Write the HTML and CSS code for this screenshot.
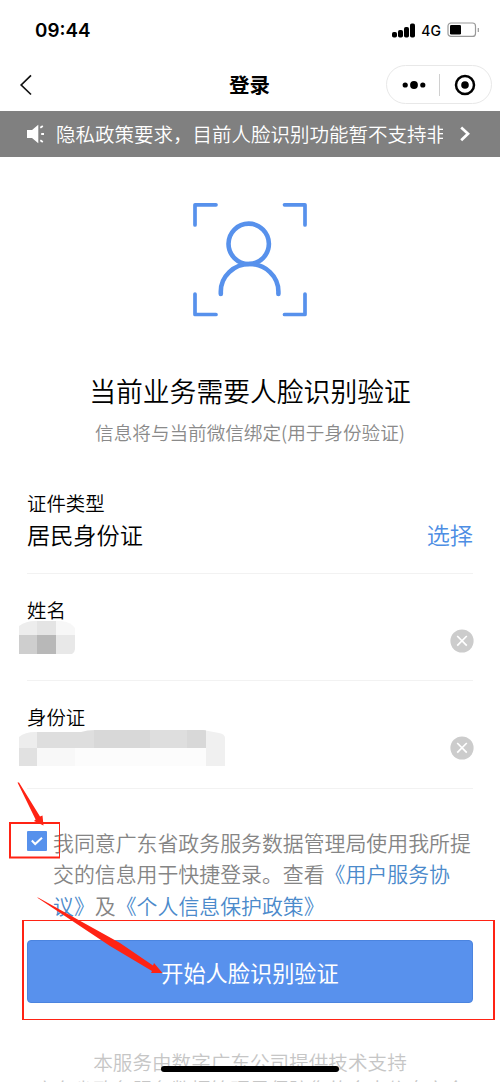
FILE: index.html
```html
<!DOCTYPE html>
<html lang="zh-CN">
<head>
<meta charset="utf-8">
<title>登录</title>
<link rel="stylesheet" href="styles.css">
</head>
<body>
<div class="screen">
  <header class="status">
    <span class="time">09:44</span>
    <div class="status-right">
      <svg class="signal" width="24" height="15" viewBox="0 0 24 15"><rect x="0" y="9" width="5" height="5.5" rx="1.8"/><rect x="6" y="7" width="5" height="7.5" rx="1.8"/><rect x="12" y="4" width="5" height="10.5" rx="1.8"/><rect x="18" y="0.5" width="5" height="14" rx="1.8"/></svg>
      <span class="network">4G</span>
      <svg class="battery" width="33" height="16" viewBox="0 0 33 16"><rect x="1" y="1" width="27.5" height="13.4" rx="3" fill="#fff" stroke="#999" stroke-width="1.2"/><rect x="3" y="3" width="11" height="9.6" rx="1.3"/><path d="M31.3 6v4" stroke="#999" stroke-width="1.2"/></svg>
    </div>
  </header>
  <nav class="nav">
    <svg class="back" width="14" height="22" viewBox="0 0 14 22"><path d="M12 1.3 2.2 11 12 20.5" fill="none" stroke="#111" stroke-width="1.7"/></svg>
    <h1 class="nav-title">登录</h1>
    <div class="capsule">
      <svg class="more" width="24" height="8" viewBox="0 0 24 8"><circle cx="3.2" cy="4" r="2.6"/><circle cx="12" cy="4" r="3.9"/><circle cx="20.8" cy="4" r="2.6"/></svg>
      <span class="capsule-line"></span>
      <svg class="target" width="22" height="22" viewBox="0 0 22 22"><circle cx="11" cy="11" r="9" fill="none" stroke="#000" stroke-width="2.5"/><circle cx="11" cy="11" r="3.8"/></svg>
    </div>
  </nav>
  <div class="notice">
    <svg class="speaker" width="18" height="20" viewBox="0 0 18 20"><path d="M0 6h5L11.3.8v18.4L5 14H0z" fill="#fff"/><path d="m13.3 3.7 2.5-1.8M14.2 10H17M13.3 16.2l2.5 1.8" stroke="#fff" stroke-width="1.8"/></svg>
    <div class="notice-text">隐私政策要求，目前人脸识别功能暂不支持非</div>
    <svg class="notice-arrow" width="12" height="16" viewBox="0 0 12 16"><path d="m2.2 1.6 6.8 6.2-6.8 6.5" fill="none" stroke="#fff" stroke-width="2.7"/></svg>
  </div>
  <main class="content">
    <svg class="face" width="116" height="116" viewBox="0 0 116 116"><g fill="none" stroke="#5791ec" stroke-linecap="round"><path stroke-width="3.7" d="M24 2.8H3V23M92.500 2.800H113V23M3 92V112.500H24M92.500 112.500H113V92" stroke-linejoin="round"/><circle cx="56.700" cy="41.800" r="20.200" stroke-width="4.600"/><path stroke-width="4.600" d="M28.800 92v-2.500a28.800 27.500 0 0 1 57.600 0V92"/></g></svg>
    <h2 class="title">当前业务需要人脸识别验证</h2>
    <p class="subtitle">信息将与当前微信绑定(用于身份验证)</p>
    <section class="fields">
      <div class="field first">
        <div class="label">证件类型</div>
        <div class="row"><span class="value">居民身份证</span><a class="choose">选择</a></div>
      </div>
      <div class="field">
        <div class="label">姓名</div>
        <div class="row">
          <svg class="mask" width="56" height="33" viewBox="0 0 56 33"><clipPath id="name-mask"><path d="M0 5Q7 0 16 0H42Q52 1 56 7V28Q56 31 53 33H0z"/></clipPath><g clip-path="url(#name-mask)" shape-rendering="crispEdges"><path fill="#ededed" d="M0 0h18v14H0z"/><path fill="#e4e4e4" d="M18 0h19v14H18z"/><path fill="#f7f7f7" d="M37 0h19v14H37z"/><path fill="#cecece" d="M0 14h18v19H0z"/><path fill="#b8b8b8" d="M18 14h19v19H18z"/><path fill="#e8e8e8" d="M37 14h19v19H37z"/></g></svg>
          <svg class="clear" width="24" height="24" viewBox="0 0 24 24"><circle cx="12" cy="12" r="11.600" fill="#ccc"/><path d="m7.200 7 9.600 9.600M16.800 7l-9.600 9.600" stroke="#fff" stroke-width="1.700"/></svg>
        </div>
      </div>
      <div class="field">
        <div class="label">身份证</div>
        <div class="row">
          <svg class="mask id-mask" width="206" height="36" viewBox="0 0 206 36"><clipPath id="id-mask"><path d="M0 7Q6 2 16 2H62Q68 0 76 0H184L200 3Q206 4 206 8V36H0z"/></clipPath><g clip-path="url(#id-mask)" shape-rendering="crispEdges"><path fill="#ededed" d="M0 0h18v18H0z"/><path fill="#dedede" d="M18 0h169v18H18z"/><path fill="#d8d8d8" d="M75 0h56v18H75zM168 0h19v18h-19z"/><path fill="#e1e1e1" d="M0 18h18v18H0z"/><path fill="#f8f8f8" d="M18 18h38v18H18z"/><path fill="#fcfcfc" d="M56 18h131v18H56z"/><path fill="#f0f0f0" d="M187 0h19v36h-19z"/></g></svg>
          <svg class="clear" width="24" height="24" viewBox="0 0 24 24"><circle cx="12" cy="12" r="11.600" fill="#ccc"/><path d="m7.200 7 9.600 9.600M16.800 7l-9.600 9.600" stroke="#fff" stroke-width="1.700"/></svg>
        </div>
      </div>
    </section>
    <div class="agreement">
      <svg class="check" width="20" height="20" viewBox="0 0 20 20"><rect width="20" height="20" rx="1" fill="#5791ec"/><path d="m4.800 9.500 3.400 3.500 6.800-6.200" fill="none" stroke="#fff" stroke-width="2"/></svg>
      <p class="terms">我同意广东省政务服务数据管理局使用我所提<br>交的信息用于快捷登录。查看<a>《用户服务协</a><br><a>议》</a>及<a>《个人信息保护政策》</a></p>
    </div>
    <button class="submit">开始人脸识别验证</button>
  </main>
  <footer class="footer">本服务由数字广东公司提供技术支持<br>广东省政务服务数据管理局保障您的个人信息安全</footer>
  <div class="home-bar"></div>
  <svg class="marks" width="500" height="1082" viewBox="0 0 500 1082">
    <g fill="none" stroke="#ff2314"><path stroke-width="2" d="M10 822.500V858M9 823H60M9 857.500H60"/><path d="M59.500 822v36M22 920.500h473M22 1019.500h473" /><path stroke-width="2" d="M23 920v100M494 920v100"/></g>
    <g fill="#ff2314"><path d="M17.500 782.500 19 782.500 40 816.500 42.500 815.500 43.500 825.500 34 821 35.600 819.500z"/><path d="M37 897.500 38.500 897.800 120 943 153 965.500 154 963 162.500 973 151 973 152 971 110 946z"/></g>
  </svg>
</div>
</body>
</html>
```
FILE: styles.css
```css
* { box-sizing: border-box; }
body { margin: 0; background: #fff; }
h1, h2, p { margin: 0; font-weight: 400; }
svg { display: block; flex: none; }
.screen {
  position: relative;
  display: flex;
  flex-direction: column;
  width: 500px;
  height: 1082px;
  overflow: hidden;
  background: #fff;
  color: #000;
  font-family: "Noto Sans CJK SC", sans-serif;
  font-weight: 350;
  white-space: nowrap;
}
.screen > * { flex: none; }
.status {
  display: flex;
  justify-content: space-between;
  align-items: center;
  height: 60px;
  padding: 0 20px 0 35px;
  font-family: Inter, sans-serif;
}
.time { font-size: 18.8px; font-weight: 600; }
.status-right { display: flex; align-items: center; }
.network { margin: 1px 6px 0 5px; font-size: 14px; font-weight: 500; line-height: 16px; }
.nav {
  display: grid;
  grid-template-columns: 1fr auto 1fr;
  align-items: center;
  height: 51px;
  padding: 0 8px 2px 19px;
}
.nav-title { font-size: 20.5px; font-weight: 600; line-height: 30px; transform: translate(-6px, -1px); }
.capsule {
  display: flex;
  align-items: center;
  justify-self: end;
  width: 106px;
  height: 39px;
  padding: 0 15px;
  border: 1px solid #e8e8e8;
  border-radius: 20px;
}
.capsule-line { flex: none; width: 1px; height: 22px; margin: 0 14px 0 13px; background: #d0d0d0; }
.notice {
  display: flex;
  align-items: center;
  height: 46px;
  padding-left: 27px;
  background: #808080;
  color: #fff;
}
.notice-text { width: 387px; margin: 0 16px 0 11px; overflow: hidden; font-size: 19.5px; line-height: 30px; }
.content { padding: 0 27px; }
.face { margin: 45px 0 0 165px; }
.title { margin-top: 53px; font-size: 26.8px; font-weight: 350; line-height: 40px; text-align: center; }
.subtitle { margin-top: 7px; font-size: 18.6px; line-height: 28px; color: #8a8a8a; font-weight: 350; text-align: center; }
.fields { margin-top: 35px; }
.field { height: 107.500px; padding-top: 14px; border-bottom: 1.500px solid #f2f2f2; }
.field.first { height: 92.500px; padding-top: 0; }
.label { padding-top: 7px; height: 37px; font-size: 19.400px; line-height: 30px; }
.row { display: flex; justify-content: space-between; align-items: center; height: 32px; font-size: 23.200px; line-height: 32px; }
.choose { color: #4d8ee4; }
.mask { margin-left: -8px; margin-top: -6px; }
.id-mask { margin-top: 0; }
.clear { margin-right: -1px; }
.agreement { display: flex; margin-top: 38px; }
.check { margin-top: 4px; }
.terms { margin: 0 0 0 6px; font-size: 20.900px; line-height: 31.500px; color: #858585; font-weight: 350; }
.terms a { color: #4b8acb; }
.submit {
  display: block;
  width: 446px;
  height: 63px;
  margin-top: 19px;
  padding: 0;
  border: 1px solid #4b84df;
  border-radius: 4px;
  background: #5891ed;
  color: #fff;
  font: 400 22.200px/60px "Noto Sans CJK SC", sans-serif;
}
.footer { margin-top: 46px; font-size: 19.600px; line-height: 26.500px; color: #c6c6c6; font-weight: 350; text-align: center; }
.home-bar { position: absolute; left: 161px; top: 1066px; width: 178px; height: 6px; border-radius: 3px; background: #000; }
.marks { position: absolute; left: 0; top: 0; pointer-events: none; }
```
